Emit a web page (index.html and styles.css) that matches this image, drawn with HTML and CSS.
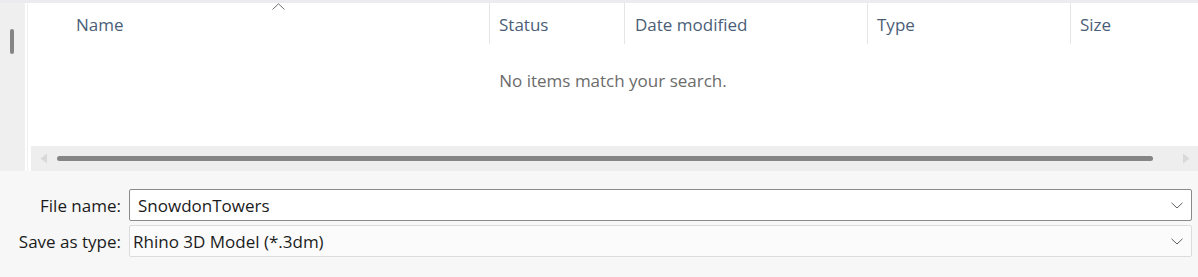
FILE: index.html
```html
<!DOCTYPE html>
<html>
<head>
<meta charset="utf-8">
<link rel="stylesheet" href="styles.css">
</head>
<body>
<div class="top">
  <div class="sidebar"><div class="vthumb"></div></div>
  <div class="divider"></div>
  <div class="pane">
    <div class="header">
      <div class="col col-name">Name<svg class="sort" width="13" height="7" viewBox="0 0 13 7"><path d="M0.5 6.5 L6.5 0.8 L12.5 6.5" fill="none" stroke="#707070" stroke-width="1"/></svg></div>
      <div class="col col-status">Status</div>
      <div class="col col-date">Date modified</div>
      <div class="col col-type">Type</div>
      <div class="col col-size">Size</div>
    </div>
    <div class="empty">No items match your search.</div>
    <div class="hscroll">
      <svg class="arrow" width="8" height="11" viewBox="0 0 8 11"><path d="M7 0.5 L0.5 5.5 L7 10.5 Z" fill="#d9d9d9"/></svg>
      <div class="hthumb"></div>
      <svg class="arrow" width="8" height="11" viewBox="0 0 8 11"><path d="M1 0.5 L7.5 5.5 L1 10.5 Z" fill="#d9d9d9"/></svg>
    </div>
  </div>
</div>
<div class="form">
  <div class="label">File name:</div>
  <div class="field field-edit"><span>SnowdonTowers</span><svg class="chev" width="12" height="7" viewBox="0 0 12 7"><path d="M0.5 0.8 L6 6 L11.5 0.8" fill="none" stroke="#606060" stroke-width="1"/></svg></div>
  <div class="label">Save as type:</div>
  <div class="field field-combo"><span>Rhino 3D Model (*.3dm)</span><svg class="chev" width="12" height="7" viewBox="0 0 12 7"><path d="M0.5 0.8 L6 6 L11.5 0.8" fill="none" stroke="#606060" stroke-width="1"/></svg></div>
</div>
</body>
</html>
```

FILE: styles.css
```css
* { box-sizing: border-box; }
html, body { margin: 0; padding: 0; }
body {
  width: 1198px;
  height: 277px;
  background: #f7f7f7;
  font-family: "Open Sans", "Noto Sans", sans-serif;
  overflow: hidden;
}
.top {
  display: flex;
  height: 171px;
  border-top: 3px solid #ececef;
  background: #ffffff;
}
.sidebar {
  width: 25px;
  background: #efefef;
  padding: 26px 0 0 10px;
}
.vthumb {
  width: 4px;
  height: 25px;
  background: #858585;
  border-radius: 2px;
}
.divider {
  width: 3px;
  border-right: 1px solid #f0f0f0;
  background: #fff;
}
.pane {
  flex: 1;
  display: flex;
  flex-direction: column;
}
.header {
  display: grid;
  grid-template-columns: 461px 135px 243px 203px 1fr;
  height: 41px;
}
.col {
  position: relative;
  font-size: 17px;
  color: #4a5e78;
  padding-left: 9px;
  padding-top: 2px;
  display: flex;
  align-items: center;
  border-left: 1px solid #e5e5e5;
}
.col-name { padding-left: 48px; border-left: none; }
.col-date { padding-left: 10px; }
.sort {
  position: absolute;
  left: 244px;
  top: 0px;
}
.empty {
  flex: 1;
  text-align: center;
  font-size: 17px;
  color: #6b6b6b;
  padding-top: 25px;
}
.hscroll {
  height: 25px;
  margin-left: 3px;
  background: #eeeeee;
  display: flex;
  align-items: center;
  padding: 0 8px 0 9px;
  gap: 9px;
}
.hthumb {
  flex: 1;
  height: 5px;
  background: #858585;
  border-radius: 3px;
  margin-right: 20px;
}
.form {
  display: grid;
  grid-template-columns: 120px 1063px;
  column-gap: 9px;
  row-gap: 4px;
  padding-top: 18px;
  align-items: center;
}
.label {
  text-align: right;
  font-size: 17px;
  color: #1b1b1b;
  margin-right: -1px;
}
.field {
  height: 32px;
  display: flex;
  align-items: center;
  justify-content: space-between;
  font-size: 17px;
  color: #1b1b1b;
  padding: 0 8px 0 8px;
  border-radius: 2px;
}
.field-edit {
  background: #ffffff;
  border: 1px solid #8a8a8a;
}
.field-combo {
  background: #fbfbfb;
  border: 1px solid #dcdcdc;
  padding-left: 3px;
}
.chev { margin-top: 1px; }
```
